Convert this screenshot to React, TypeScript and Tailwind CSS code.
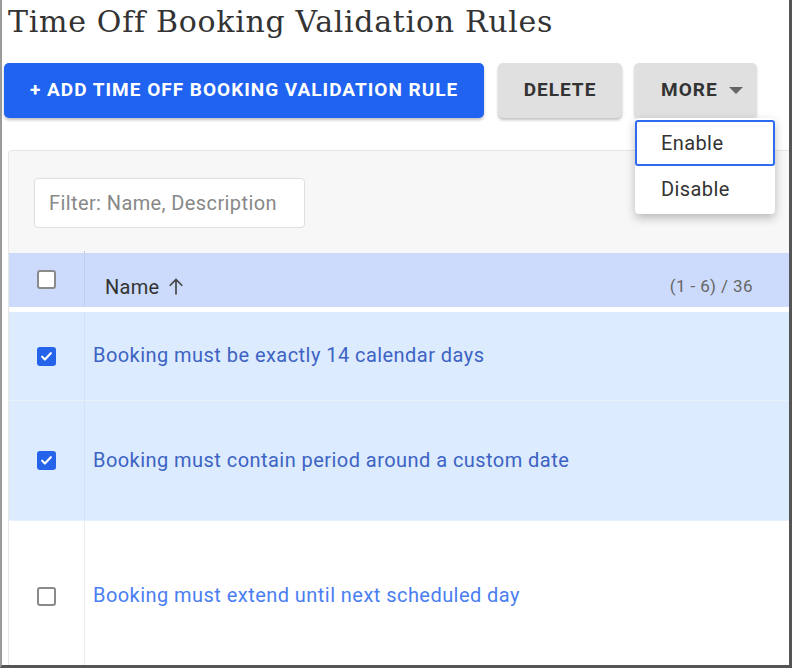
import React from "react";

const Check = ({ checked }: { checked: boolean }) =>
  checked ? (
    <div className="w-[19px] h-[19px] rounded-[3px] bg-[#2563eb] flex items-center justify-center">
      <svg width="13" height="13" viewBox="0 0 24 24" fill="none" stroke="white" strokeWidth="4" strokeLinecap="round" strokeLinejoin="round">
        <path d="M4 12.5l5 5L20 6" />
      </svg>
    </div>
  ) : (
    <div className="w-[19px] h-[19px] rounded-[3px] bg-white border-2 border-[#8a8a8a]" />
  );

const rows = [
  { text: "Booking must be exactly 14 calendar days", checked: true, h: "h-[89px]" },
  { text: "Booking must contain period around a custom date", checked: true, h: "h-[120px]" },
  { text: "Booking must extend until next scheduled day", checked: false, h: "h-[150px]" },
];

export default function App() {
  return (
    <div className="w-[792px] h-[668px] bg-white relative overflow-hidden font-['Roboto',sans-serif]">
      <div className="absolute inset-0 border-l-2 border-l-[#9a9a9a] border-r-[3px] border-r-[#555] border-b-[3px] border-b-[#555] pointer-events-none z-20" />
      <div className="pl-[8px] pt-[2px] h-[58px]">
        <h1 className="font-['DejaVu_Serif',serif] text-[30px] text-[#333] leading-[40px] tracking-[0.7px]">
          Time Off Booking Validation Rules
        </h1>
      </div>
      <div className="flex pl-[4px] h-[56px] mt-[5px]">
        <button className="w-[480px] h-[55px] rounded-[5px] bg-[#1f63f0] text-white font-bold text-[19px] shadow-[0_2px_3px_rgba(0,0,0,0.25)] flex items-center pl-[26px] tracking-[1px]">
          + ADD TIME OFF BOOKING VALIDATION RULE
        </button>
        <button className="ml-[14px] w-[124px] h-[55px] rounded-[5px] bg-[#e0e0e0] text-[#333] font-bold text-[19px] tracking-[1px] shadow-[0_2px_3px_rgba(0,0,0,0.25)] flex items-center justify-center">
          DELETE
        </button>
        <button className="ml-[12px] w-[123px] h-[55px] rounded-[5px] bg-[#e0e0e0] text-[#333] font-bold text-[19px] tracking-[1px] shadow-[0_2px_3px_rgba(0,0,0,0.15)] flex items-center pl-[27px] gap-[11px]">
          MORE
          <svg width="14" height="8" viewBox="0 0 14 8"><path d="M0 0h14L7 7z" fill="#666" /></svg>
        </button>
      </div>
      <div className="ml-[8px] mr-[3px] mt-[31px] bg-[#f7f7f7] border-t border-l border-[#e6e6e6] rounded-tl-[4px]">
        <div className="h-[102px] pt-[27px] pl-[25px]">
          <div className="w-[271px] h-[50px] bg-white border border-[#dedede] rounded-[4px] flex items-center pl-[14px] text-[20px] tracking-[0.4px] text-[#888]">
            Filter: Name, Description
          </div>
        </div>
        <div className="h-[54px] bg-[#ccdbfb] flex border-b-[5px] border-white box-content">
          <div className="w-[76px] flex items-center justify-center border-r border-[#bfcdee] -mt-[2px]">
            <Check checked={false} />
          </div>
          <div className="flex-1 flex items-center pl-[20px] pr-[36px] pt-[14px]">
            <span className="text-[20px] text-[#333] flex items-center gap-[6px] tracking-[0.3px]">
              Name
              <svg width="20" height="20" viewBox="0 0 24 24" fill="none" stroke="#444" strokeWidth="2"><path d="M12 21V3M4.5 10.5L12 3l7.5 7.5" /></svg>
            </span>
            <span className="ml-auto text-[17px] tracking-[0.4px] text-[#666]">(1 - 6) / 36</span>
          </div>
        </div>
        {rows.map((r, i) => (
          <div key={i} className={`flex ${r.h} ${r.checked ? "bg-[#dcebfd]" : "bg-white"} ${i < 2 ? "border-b border-[#e8f0fb]" : ""}`}>
            <div className={`w-[76px] flex items-center justify-center border-r ${r.checked ? "border-[#d2e1f5]" : "border-[#ececec]"}`}>
              <Check checked={r.checked} />
            </div>
            <div className={`flex-1 flex items-center pl-[8px] pb-[2px] text-[20px] tracking-[0.45px] ${r.checked ? "text-[#3d63c4]" : "text-[#4a7ef2]"}`}>
              {r.text}
            </div>
          </div>
        ))}
      </div>
      <div className="absolute left-[635px] top-[118px] w-[140px] bg-white rounded-[4px] shadow-[0_4px_10px_rgba(0,0,0,0.25)] z-10 py-[2px]">
        <div className="h-[46px] border-2 border-[#2f6bf0] rounded-[3px] flex items-center pl-[24px] text-[20px] tracking-[0.4px] text-[#333]">
          Enable
        </div>
        <div className="h-[46px] flex items-center pl-[26px] text-[20px] tracking-[0.4px] text-[#333]">
          Disable
        </div>
      </div>
    </div>
  );
}
